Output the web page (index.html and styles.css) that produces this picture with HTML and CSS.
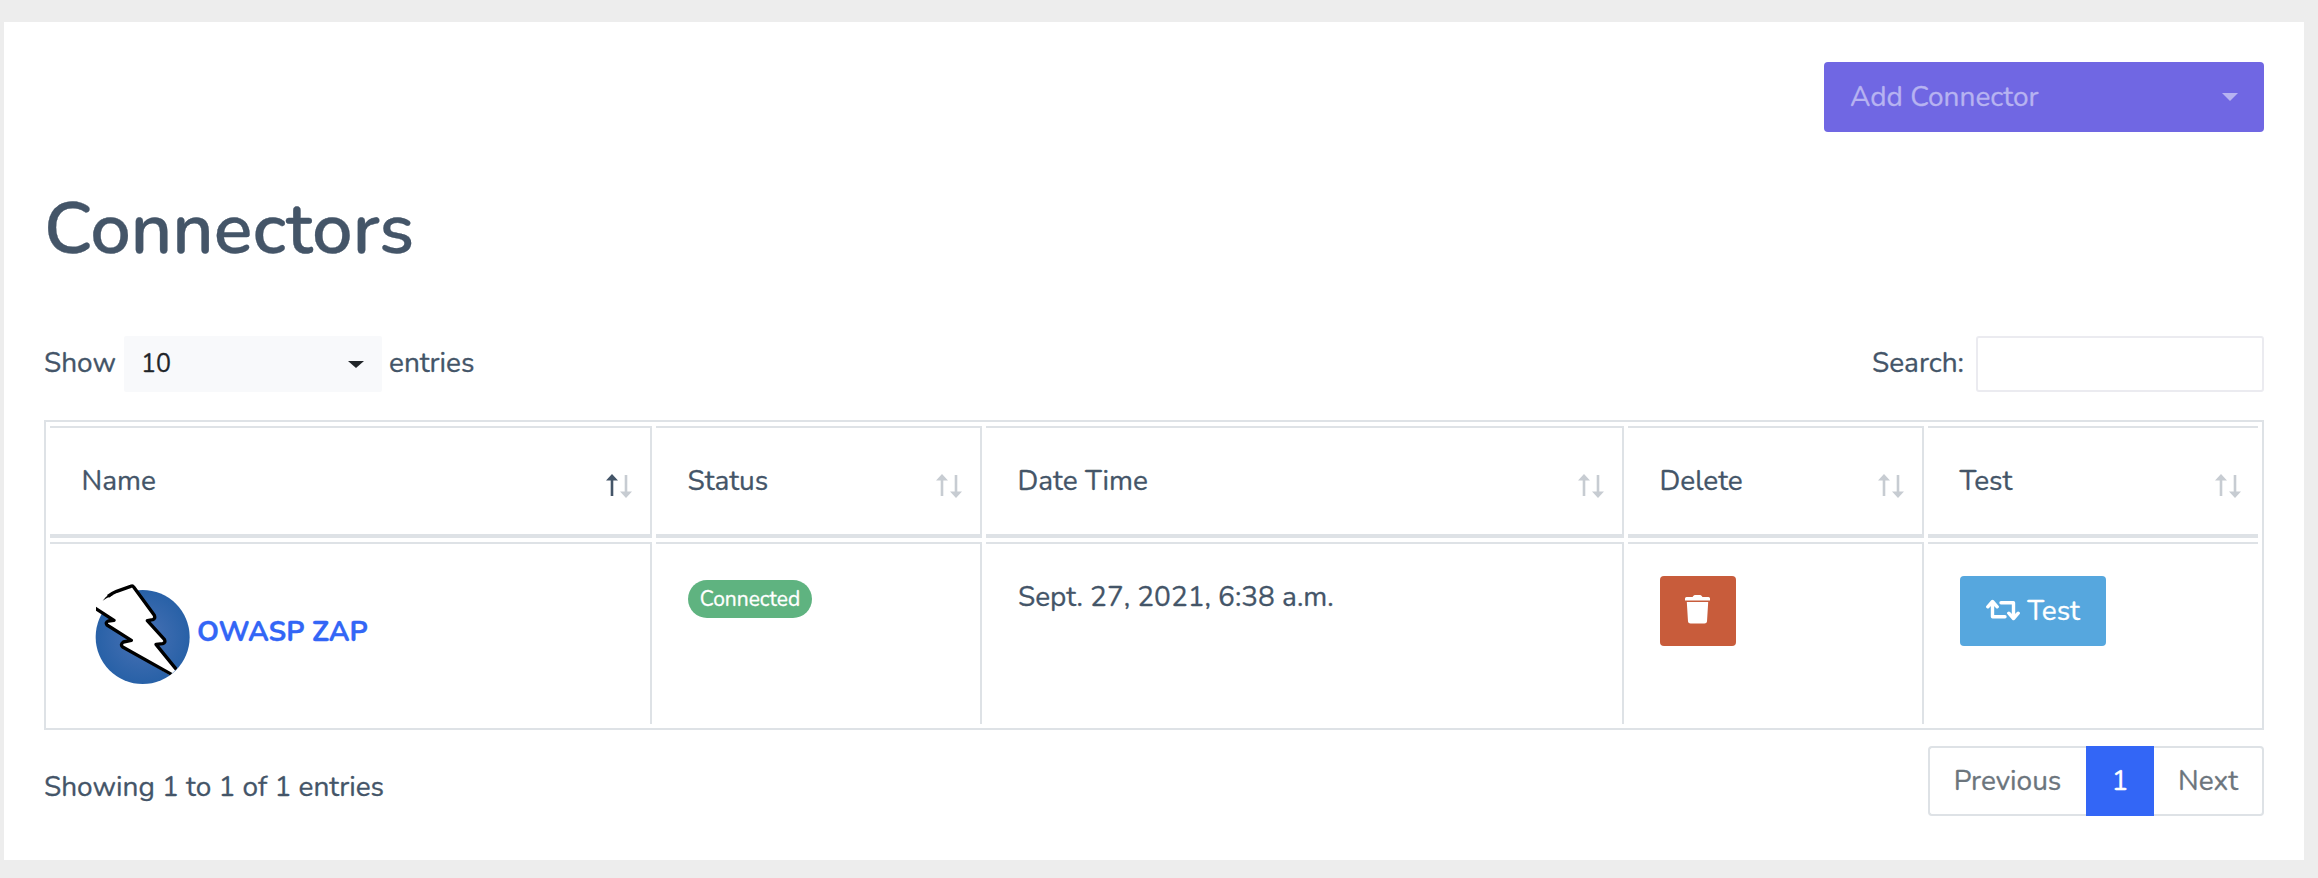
FILE: index.html
```html
<!DOCTYPE html>
<html lang="en">
<head>
<meta charset="utf-8">
<title>Connectors</title>
<link rel="stylesheet" href="styles.css">
</head>
<body>
<svg class="defs" width="0" height="0" aria-hidden="true">
  <symbol id="up" viewBox="0 0 12 24"><path d="M6 0 12 6.500H7.300V22H4.700V6.500H0Z"/></symbol>
  <symbol id="down" viewBox="0 0 12 24"><path d="M6 24 0 17.500H4.700V1H7.300V17.500H12Z"/></symbol>
</svg>
<main class="card">
  <div class="actions">
    <button class="add"><span>Add Connector</span><i class="caret"></i></button>
  </div>
  <h1 class="title">Connectors</h1>
  <div class="controls">
    <div class="length"><span class="word">Show</span><div class="select"><span>10</span><i class="caret"></i></div><span class="word">entries</span></div>
    <label class="search"><span>Search:</span><input type="text" class="field"></label>
  </div>
  <div class="table">
    <div class="th"><span>Name</span><span class="sort"><svg class="on"><use href="#up"/></svg><svg><use href="#down"/></svg></span></div>
    <div class="th"><span>Status</span><span class="sort"><svg><use href="#up"/></svg><svg><use href="#down"/></svg></span></div>
    <div class="th"><span>Date Time</span><span class="sort"><svg><use href="#up"/></svg><svg><use href="#down"/></svg></span></div>
    <div class="th"><span>Delete</span><span class="sort"><svg><use href="#up"/></svg><svg><use href="#down"/></svg></span></div>
    <div class="th last"><span>Test</span><span class="sort"><svg><use href="#up"/></svg><svg><use href="#down"/></svg></span></div>
    <div class="td connector">
      <svg class="logo" viewBox="72 36 294 315">
        <defs>
          <radialGradient id="ball"><stop offset="0" stop-color="#4a72b5"/><stop offset="1" stop-color="#2861a7"/></radialGradient>
          <clipPath id="edge"><path d="M78 30H330L321 296 300 316 280 345H78Z"/></clipPath>
        </defs>
        <circle cx="218" cy="201" r="141" fill="url(#ball)"/>
        <g clip-path="url(#edge)">
          <path d="M70 114 98 92Q114 76 140 64L182 49Q188 46 191 51L253 136Q257 146 248 149L232 152 283 208Q288 218 278 221L258 223 330 310 310 322 158 231Q150 224 160 216L184 211 111 165Q105 157 115 153L132 151Z" fill="#fff"/>
          <path d="M74 114 132 151 115 153Q105 157 111 165L184 211 160 216Q150 224 158 231L306 314M114 79Q126 70 140 64L182 49Q188 46 191 51L253 136Q257 146 248 149L232 152 283 208Q288 218 278 221L258 223 322 302" fill="none" stroke="#000" stroke-width="10" stroke-linejoin="round"/>
          <path d="M98 92Q106 80 124 68L128 76Q112 83 98 92Z"/>
        </g>
      </svg>
      <a class="link">OWASP ZAP</a>
    </div>
    <div class="td"><span class="badge">Connected</span></div>
    <div class="td">Sept. 27, 2021, 6:38 a.m.</div>
    <div class="td"><button class="btn danger"><svg class="trash" viewBox="0 0 25 29"><path d="M8.500 .8Q9 0 10 0H15Q16 0 16.500 .8L17.500 2H23.500Q25 2 25 3.500V5.500H0V3.500Q0 2 1.500 2H7.500ZM1.800 7H23.200L22 26.500Q21.800 28.500 19.500 28.500H5.500Q3.200 28.500 3 26.500Z"/></svg></button></div>
    <div class="td last"><button class="btn info"><svg class="retweet" viewBox="0 0 34 22"><path d="M1.800 7.800 6.500 2.500 11.200 7.800M6.500 3V17.800H19M15 3.700H27.500V18.500M22.800 14.200 27.500 19.500 32.200 14.200"/></svg><span>Test</span></button></div>
  </div>
  <div class="footer">
    <span class="info-line">Showing 1 to 1 of 1 entries</span>
    <nav class="pages"><span class="page prev">Previous</span><span class="page active">1</span><span class="page next">Next</span></nav>
  </div>
</main>
</body>
</html>
```
FILE: styles.css
```css
* { box-sizing: border-box; }
body {
  margin: 0; padding: 22px 14px 18px 4px; height: 878px; background: #ededed;
  font: 28px/42px Nunito, Lato, "Open Sans", sans-serif; color: #445568;
  -webkit-text-stroke: .3px currentColor;
  white-space: nowrap;
}
.defs { display: block; height: 0; }
button { font: inherit; border: 0; cursor: pointer; }
.card { height: 838px; background: #fff; padding: 40px; display: flex; flex-direction: column; }
.actions { display: flex; justify-content: flex-end; }
.add {
  width: 440px; height: 70px; padding: 0 26px; border-radius: 4px; background: #7067e3; color: #b7b3f1;
  display: flex; align-items: center; justify-content: space-between;
}
.caret { border: 8px solid transparent; border-top-color: currentColor; border-bottom: 0; }
.title { margin: 54px 0 0; height: 86px; font-size: 72px; line-height: 86px; font-weight: 600; }
.controls { margin-top: 64px; height: 56px; display: flex; justify-content: space-between; }
.length, .search { display: flex; align-items: center; }
.select {
  width: 258px; height: 56px; margin: 0 7px 0 8px; padding: 0 18px 0 17px; border-radius: 2px;
  background: #f8f9fb; color: #212529; font-size: 25px; display: flex; align-items: center; justify-content: space-between;
}
.word { width: 72px; padding-bottom: 3px; }
.select .caret { border-top-width: 7px; }
.search { gap: 12px; }
.search span { padding-bottom: 2px; }
.field { width: 288px; height: 56px; border: 2px solid #ebebf0; border-radius: 3px; outline: 0; background: #fff; }
.table {
  margin-top: 28px; height: 310px; border: 2px solid #dee2e6; padding: 4px;
  display: grid; grid-template-columns: 602px 326px 638px 296px 330px; grid-template-rows: 112px 182px; gap: 4px;
}
.th, .td { border: 0 solid #dee2e6; border-top-width: 2px; border-right-width: 2px; padding: 32px 24px 0 32px; }
.th { border-bottom-width: 4px; display: flex; justify-content: space-between; padding: 32px 18px 0 31.5px; }
.last { border-right-width: 0; }
.th.last { padding-right: 17px; }
.sort { display: flex; gap: 2px; padding-top: 14px; }
.sort svg { width: 12px; height: 24px; fill: #c7ccd2; }
.sort svg.on { fill: #445568; }
.connector { display: flex; padding: 38px 0 0 44px; }
.logo { width: 98px; height: 105px; }
.link { margin: 29px 0 0 5px; color: #3366f6; font-weight: 700; }
.badge {
  display: flex; width: 124px; height: 38px; margin-top: 4px; align-items: center; justify-content: center;
  border-radius: 19px; background: #5fb380; color: #fff; font-size: 21px;
}
.btn { height: 70px; border-radius: 4px; color: #fff; display: flex; align-items: center; padding: 0; justify-content: center; }
.danger { width: 76px; padding: 0 2px 3px 0; background: #c85c3b; }
.info { width: 146px; background: #56a7de; gap: 7px; }
.trash { width: 25px; height: 29px; fill: #fff; }
.retweet { width: 34px; height: 22px; margin-bottom: 3px; fill: none; stroke: #fff; stroke-width: 3.4; stroke-linejoin: round; stroke-linecap: round; }
.footer { margin-top: 16px; display: flex; justify-content: space-between; }
.info-line { padding-top: 20px; }
.pages { display: flex; width: 336px; height: 70px; line-height: 66px; color: #6c757d; text-align: center; }
.page { border: 2px solid #dee2e6; }
.prev { width: 158px; padding-right: 1px; border-right: 0; border-radius: 4px 0 0 4px; }
.active { width: 68px; background: #3366f6; border-color: #3366f6; color: #fff; }
.next { width: 110px; border-left: 0; border-radius: 0 4px 4px 0; }
```
